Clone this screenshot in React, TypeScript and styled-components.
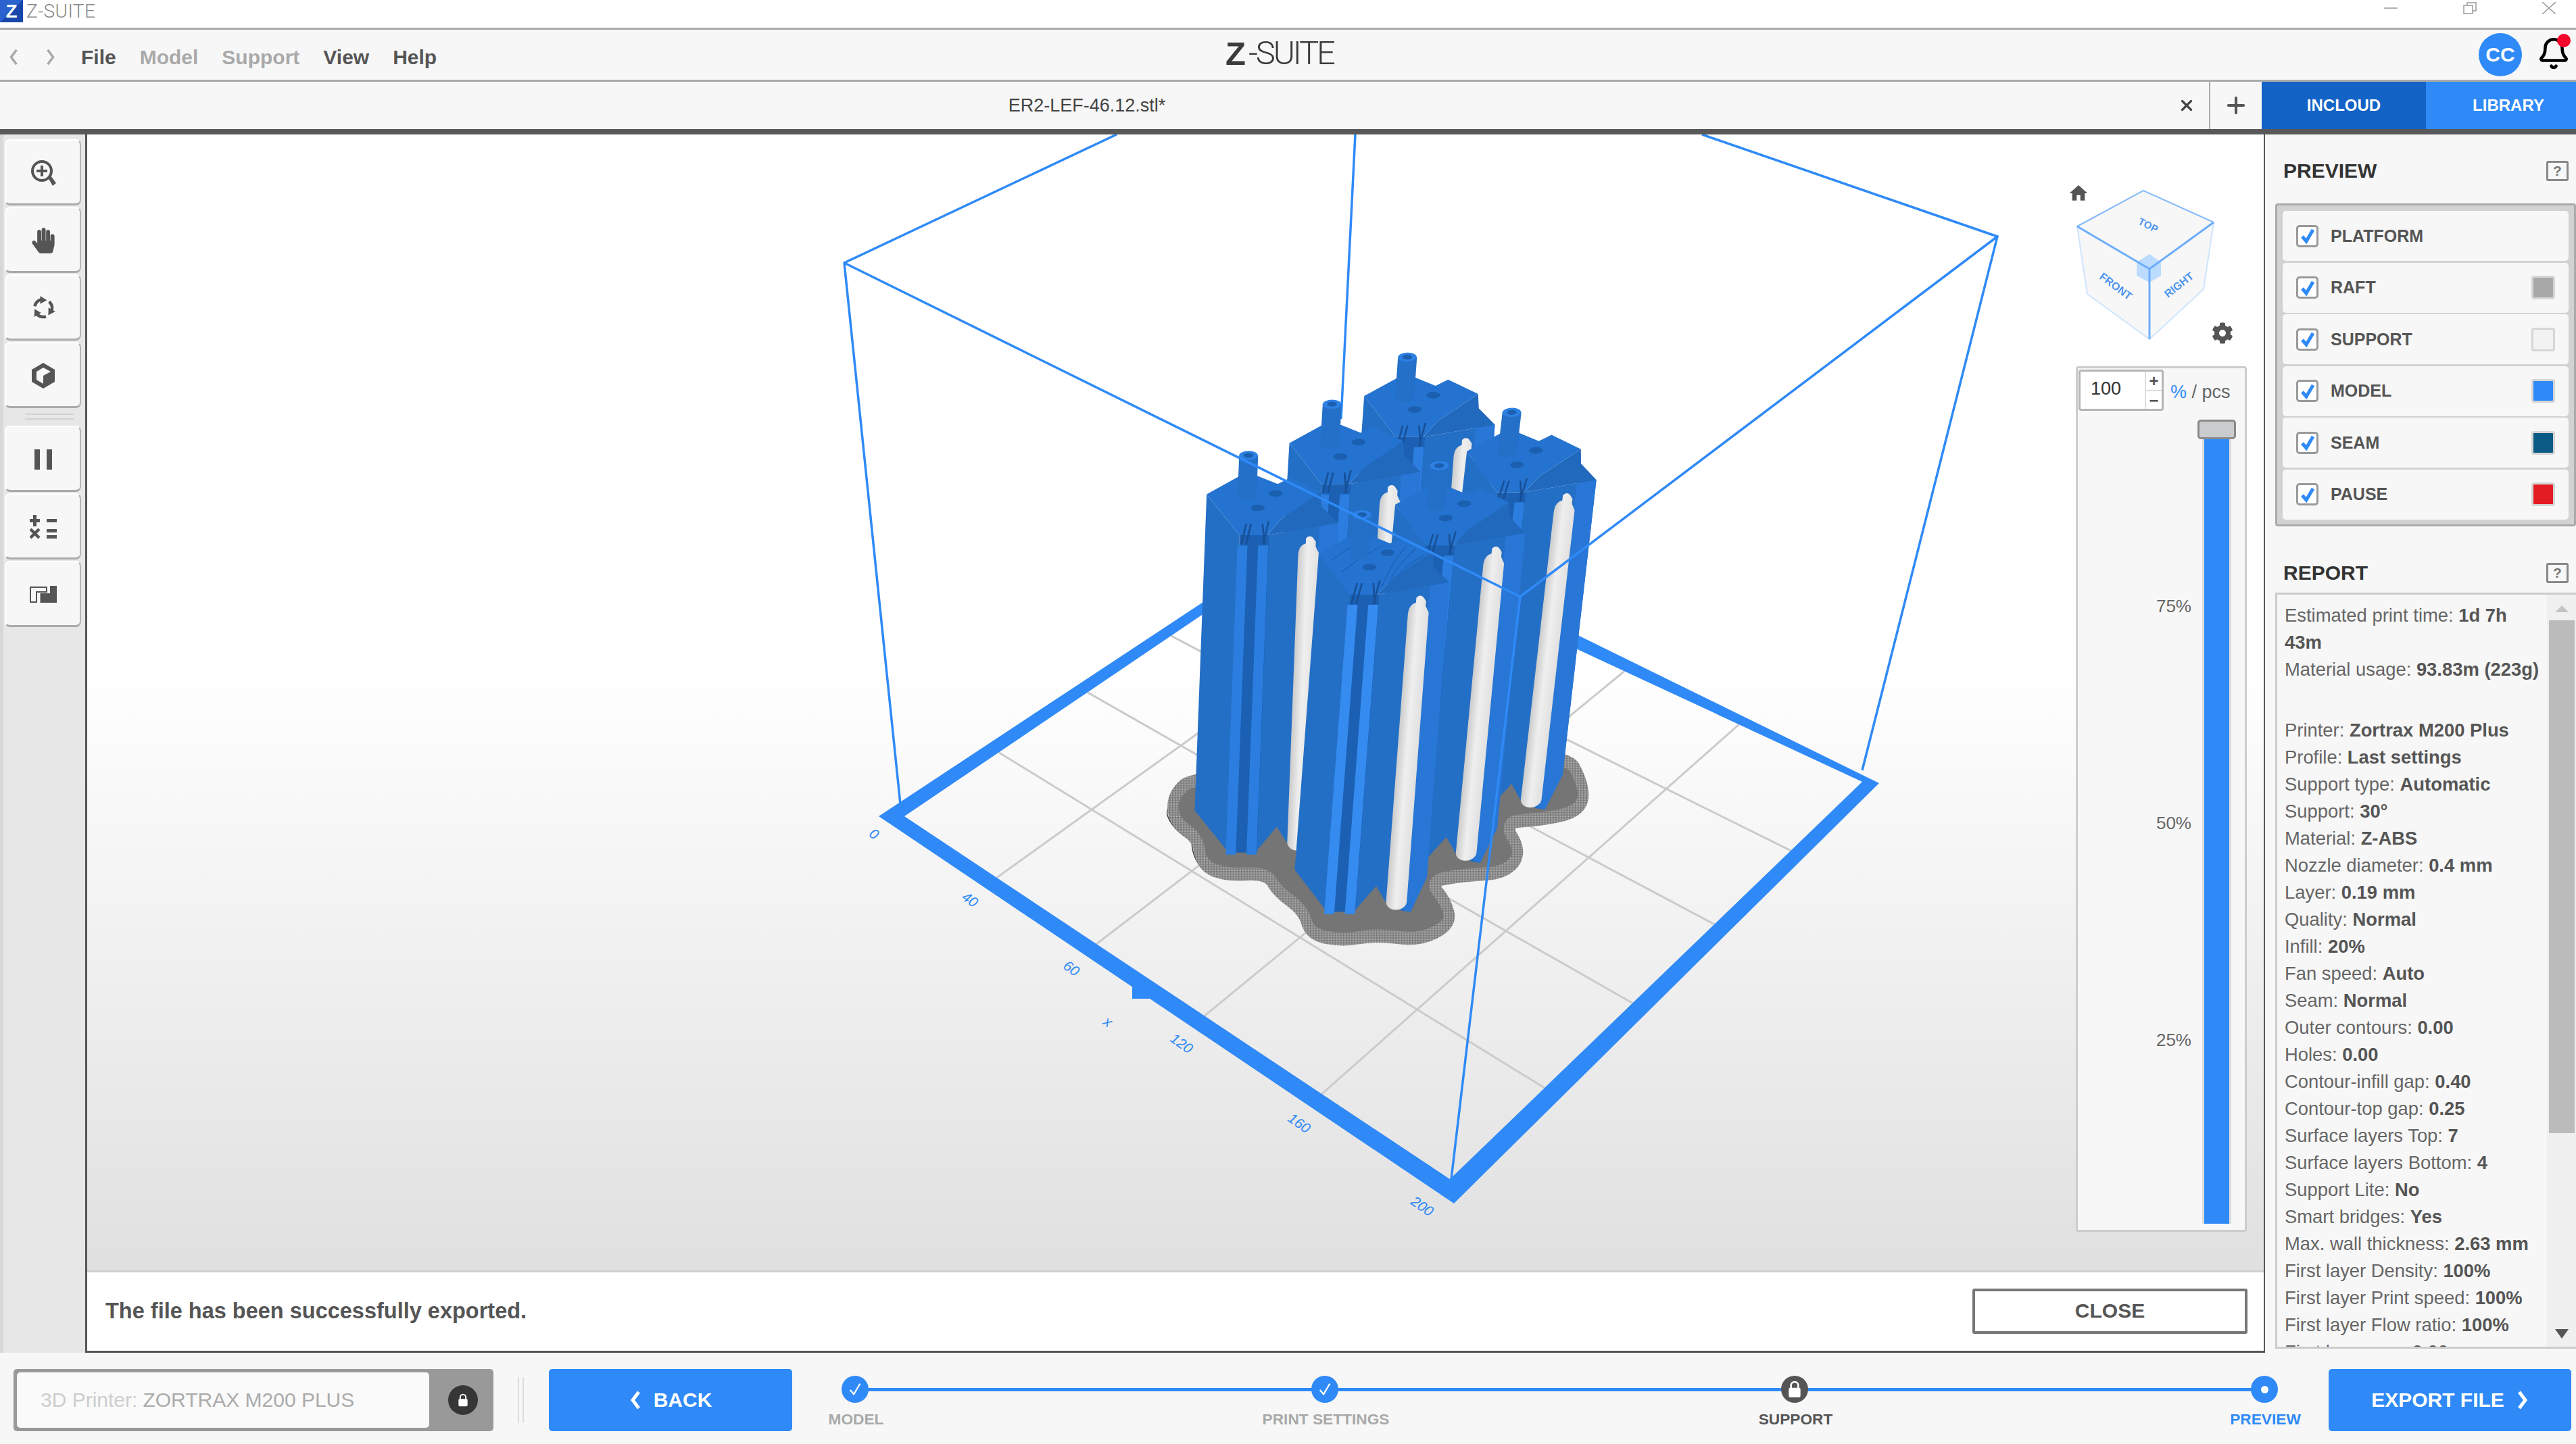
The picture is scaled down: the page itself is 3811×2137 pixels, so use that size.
import React from 'react';
import styled, { createGlobalStyle } from 'styled-components';
import { Bell, Plus, X } from 'lucide-react';
import { FaHandPaper, FaCog } from 'react-icons/fa';
import { MdHome } from 'react-icons/md';

const BLUE = '#2f8af7';

const GlobalStyle = createGlobalStyle`
    html, body {
        margin: 0;
        padding: 0;
        background: #f7f7f7;
    }
    * {
        box-sizing: border-box;
    }
    body {
        font-family: 'Liberation Sans', Arial, sans-serif;
        color: #555;
    }
`;

const Page = styled.div`
    width: 3811px;
    height: 2137px;
    display: flex;
    flex-direction: column;
    overflow: hidden;
`;

/* window title */
const TitleBar = styled.div`
    height: 44px;
    background: #fff;
    border-bottom: 3px solid #aaa;
    display: flex;
    align-items: flex-start;
`;

const AppMark = styled.div`
    width: 34px;
    height: 33px;
    background: linear-gradient(135deg, #2a62cf 50%, #1846ab 50%);
    color: #fff;
    font-size: 28px;
    font-weight: 700;
    line-height: 33px;
    text-align: center;
`;

const AppName = styled.div`
    margin-left: 5px;
    font-family: Roboto, sans-serif;
    font-weight: 300;
    font-size: 28px;
    line-height: 33px;
    letter-spacing: 0.4px;
    color: #888;
`;

const WinControls = styled.div`
    margin-left: auto;
    display: flex;
    gap: 97px;
    padding: 3px 30px 0 0;
`;

/* menu */
const MenuBar = styled.div`
    height: 77px;
    background: #f7f7f7;
    border-bottom: 3px solid #aaa;
    display: grid;
    grid-template-columns: 1813px auto 1fr;
    align-items: center;
`;

const MenuLeft = styled.div`
    display: flex;
    align-items: center;
    padding: 7px 0 0 12px;
`;

const NavArrows = styled.div`
    display: flex;
    gap: 39px;
    width: 108px;
`;

const MenuItem = styled.span<{ $off?: boolean }>`
    font-size: 30px;
    font-weight: 700;
    color: ${(p) => (p.$off ? '#a9a9a9' : '#555')};
    margin-right: 35px;
`;

const Logo = styled.div`
    display: flex;
    align-items: center;
    color: #3b3b3b;
    line-height: 36px;
    height: 36px;
    margin-top: -4px;
`;

const LogoZ = styled.span`
    font-size: 49px;
    font-weight: 700;
    width: 34px;
`;

const LogoRest = styled.span`
    font-family: Roboto, sans-serif;
    font-weight: 300;
    font-size: 49px;
    letter-spacing: -3.2px;
`;

const MenuRight = styled.div`
    display: flex;
    justify-content: flex-end;
    align-items: center;
    padding-right: 8px;
    gap: 22px;
`;

const Avatar = styled.div`
    width: 64px;
    height: 64px;
    border-radius: 50%;
    background: ${BLUE};
    color: #fff;
    font-size: 30px;
    font-weight: 700;
    display: flex;
    align-items: center;
    justify-content: center;
`;

const BellWrap = styled.div`
    position: relative;
    width: 50px;
    height: 56px;
    margin-top: 2px;
`;

const BellDot = styled.span`
    position: absolute;
    right: 0;
    top: -4px;
    width: 20px;
    height: 20px;
    border-radius: 50%;
    background: #f5062c;
`;

/* tabs */
const TabBar = styled.div`
    height: 78px;
    background: #f7f7f7;
    border-bottom: 8px solid #585858;
    display: flex;
    align-items: stretch;
`;

const FileTab = styled.div`
    flex: 1;
    display: flex;
    align-items: center;
    padding-right: 20px;
`;

const FileName = styled.div`
    flex: 1;
    text-align: center;
    font-size: 27px;
    padding-right: 6px;
    color: #444;
`;

const NewTab = styled.div`
    width: 78px;
    border-left: 2px solid #aaa;
    display: flex;
    align-items: center;
    justify-content: center;
    color: #555;
`;

const CloudTab = styled.div<{ $dark?: boolean }>`
    width: ${(p) => (p.$dark ? 243 : 222)}px;
    background: ${(p) => (p.$dark ? '#1363c6' : BLUE)};
    color: #fff;
    font-size: 24px;
    font-weight: 700;
    padding-left: ${(p) => (p.$dark ? 0 : 22)}px;
    display: flex;
    align-items: center;
    justify-content: center;
`;

/* main area */
const Main = styled.div`
    height: 1803px;
    display: flex;
`;

const ToolBar = styled.div`
    width: 129px;
    background: #e7e7e7;
    border-left: 5px solid #d8d8d8;
    border-right: 3px solid #555;
    padding: 7px 0 0 2px;
    display: flex;
    flex-direction: column;
    gap: 2px;
`;

const ToolButton = styled.div`
    width: 113px;
    height: 98px;
    background: #f7f7f7;
    border-radius: 8px;
    border-top: 2px solid #fff;
    border-left: 2px solid #fff;
    border-right: 2px solid #b5b5b5;
    border-bottom: 3px solid #aaa;
    padding-top: 2px;
    display: flex;
    align-items: center;
    justify-content: center;
    color: #555;
`;

const ToolSeparator = styled.div`
    height: 9px;
    width: 72px;
    margin: 6px 0 7px 30px;
    border-top: 2px solid #d2d2d2;
    border-bottom: 2px solid #d2d2d2;
`;

const Center = styled.div`
    flex: 1;
    display: flex;
    flex-direction: column;
    border-right: 2px solid #555;
    border-bottom: 3px solid #555;
`;

const Viewport = styled.div`
    position: relative;
    height: 1681px;
    background: linear-gradient(#fff 0, #fff 47%, #e0e0e0 100%);
    overflow: hidden;
`;

const Scene = styled.svg`
    display: block;
    width: 100%;
    height: 100%;
`;

const CubeWidget = styled.svg`
    position: absolute;
    left: 2921px;
    top: 61px;
    width: 300px;
    height: 270px;
    filter: blur(0.7px);
`;

const SliderPanel = styled.div`
    position: absolute;
    left: 2942px;
    top: 343px;
    width: 253px;
    height: 1281px;
    background: #f7f7f7;
    border: 3px solid #ccc;
    border-radius: 4px;
    padding: 2px 0 0 1px;
`;

const SliderHead = styled.div`
    display: flex;
    align-items: center;
    height: 61px;
`;

const ValueBox = styled.div`
    width: 126px;
    height: 61px;
    background: #fff;
    border: 3px solid #b5b5b5;
    border-radius: 4px;
    display: flex;
    align-items: stretch;
`;

const ValueText = styled.div`
    flex: 1;
    font-size: 27px;
    color: #333;
    padding-left: 15px;
    line-height: 50px;
`;

const Steppers = styled.div`
    width: 25px;
    border-left: 2px solid #ddd;
    display: flex;
    flex-direction: column;
    color: #555;
    font-size: 24px;
    font-weight: 700;
    line-height: 27px;
    text-align: center;
`;

const StepperCell = styled.div`
    flex: 1;
    & + & {
        border-top: 2px solid #ddd;
    }
`;

const Unit = styled.div`
    margin: 6px 0 0 10px;
    font-size: 27px;
    color: #666;
    white-space: nowrap;
`;

const UnitBlue = styled.span`
    color: ${BLUE};
`;

const SliderBody = styled.div`
    display: flex;
    margin-top: 13px;
`;

const Ticks = styled.div`
    width: 167px;
    padding-top: 256px;
    display: flex;
    flex-direction: column;
    gap: 281px;
    text-align: right;
    font-size: 26px;
    line-height: 40px;
    color: #666;
`;

const TrackColumn = styled.div`
    margin-left: 9px;
    width: 57px;
    display: flex;
    flex-direction: column;
    align-items: center;
`;

const Handle = styled.div`
    width: 57px;
    height: 29px;
    background: #c9cbcc;
    border: 3px solid #8a8a8a;
    border-radius: 5px;
`;

const Track = styled.div`
    width: 43px;
    height: 1161px;
    background: ${BLUE};
    border-left: 3px solid #ddd;
    border-right: 3px solid #ddd;
`;

const MessageBar = styled.div`
    flex: 1;
    background: #fff;
    border-top: 3px solid #d0d0d0;
    display: flex;
    align-items: center;
    justify-content: space-between;
    padding: 0 24px 2px 27px;
`;

const MessageText = styled.div`
    font-size: 32.5px;
    font-weight: 700;
    color: #555;
`;

const CloseButton = styled.div`
    width: 407px;
    height: 67px;
    border: 4px solid #777;
    border-radius: 3px;
    color: #555;
    font-size: 30px;
    font-weight: 700;
    display: flex;
    align-items: center;
    justify-content: center;
`;

/* right panel */
const SidePanel = styled.div`
    width: 460px;
    background: #f7f7f7;
    padding: 34px 0 6px 15px;
    display: flex;
    flex-direction: column;
`;

const PanelHead = styled.div`
    display: flex;
    align-items: center;
    justify-content: space-between;
    height: 40px;
    padding: 0 11px 0 12px;
`;

const PanelTitle = styled.div`
    font-size: 30px;
    font-weight: 700;
    color: #333;
`;

const HelpBox = styled.div`
    width: 33px;
    height: 30px;
    border: 3px solid #888;
    border-radius: 3px;
    color: #777;
    font-size: 21px;
    font-weight: 700;
    line-height: 24px;
    text-align: center;
`;

const PreviewBox = styled.div`
    margin-top: 28px;
    border: 3px solid #aaa;
    border-radius: 4px;
    background: #d2d2d2;
    padding: 8px 8px 7px;
    display: flex;
    flex-direction: column;
    gap: 2.5px;
`;

const PreviewRow = styled.div`
    height: 74px;
    background: #f7f7f7;
    border-radius: 5px;
    display: flex;
    align-items: center;
    padding: 0 20px;
`;

const CheckBox = styled.div`
    width: 33px;
    height: 33px;
    background: #fff;
    border: 3px solid #999;
    border-radius: 5px;
    display: flex;
    align-items: center;
    justify-content: center;
`;

const RowLabel = styled.div`
    margin-left: 18px;
    flex: 1;
    font-size: 25px;
    font-weight: 700;
    color: #555;
`;

const Swatch = styled.div<{ $color: string }>`
    width: 35px;
    height: 35px;
    border: 3px solid #d5d5d5;
    border-radius: 4px;
    background: ${(p) => p.$color};
`;

const ReportHead = styled(PanelHead)`
    margin-top: 49px;
`;

const ReportBox = styled.div`
    margin-top: 9px;
    flex: 1;
    min-height: 0;
    border: 3px solid #ccc;
    border-right: none;
    display: flex;
    overflow: hidden;
`;

const ReportText = styled.div`
    flex: 1;
    padding: 11px 3px 0 11px;
    font-size: 27.4px;
    line-height: 40px;
    color: #666;
`;

const ReportLine = styled.div`
    b {
        color: #555;
    }
`;

const ReportGap = styled.div`
    height: 50px;
`;

const ScrollBar = styled.div`
    width: 43px;
    background: #f0f0f0;
    display: flex;
    flex-direction: column;
    align-items: center;
    padding: 16px 2px 12px;
`;

const ScrollThumb = styled.div`
    width: 38px;
    height: 759px;
    margin-top: 12px;
    background: #bbb;
`;

const ArrowUp = styled.div`
    width: 0;
    height: 0;
    border-left: 10px solid transparent;
    border-right: 10px solid transparent;
    border-bottom: 10px solid #c4c4c4;
`;

const ArrowDown = styled.div`
    width: 0;
    height: 0;
    margin-top: auto;
    border-left: 10px solid transparent;
    border-right: 10px solid transparent;
    border-top: 14px solid #555;
`;

/* bottom */
const BottomBar = styled.div`
    flex: 1;
    display: flex;
    align-items: center;
    padding: 5px 7px 0 20px;
    background: #f7f7f7;
`;

const PrinterField = styled.div`
    width: 710px;
    height: 92px;
    background: #999;
    border-radius: 5px;
    padding: 5px 0 5px 5px;
    display: flex;
    align-items: center;
`;

const PrinterName = styled.div`
    width: 610px;
    height: 82px;
    background: #fafafa;
    border-radius: 5px;
    padding-left: 35px;
    display: flex;
    align-items: center;
    font-size: 30px;
    color: #ababab;
`;

const PrinterPrefix = styled.span`
    color: #cdcdcd;
    margin-right: 8px;
`;

const PrinterLock = styled.div`
    width: 44px;
    height: 44px;
    margin-left: 28px;
    border-radius: 50%;
    background: #363636;
    display: flex;
    align-items: center;
    justify-content: center;
`;

const BarDivider = styled.div`
    width: 9px;
    height: 68px;
    margin: 0 37px 0 36px;
    border-left: 2px solid #ddd;
    border-right: 2px solid #ddd;
`;

const ActionButton = styled.div<{ $w: number }>`
    width: ${(p) => p.$w}px;
    height: 92px;
    background: ${BLUE};
    border-radius: 5px;
    color: #fff;
    font-size: 30px;
    font-weight: 700;
    display: flex;
    align-items: center;
    justify-content: center;
    gap: 18px;
`;

const Stepper = styled.div`
    position: relative;
    width: 2185px;
    height: 92px;
    margin: 0 45px 0 43px;
    display: flex;
    justify-content: space-between;
`;

const StepLine = styled.div`
    position: absolute;
    left: 50px;
    right: 50px;
    top: 28px;
    height: 5px;
    background: ${BLUE};
`;

const Step = styled.div`
    position: relative;
    width: 100px;
    padding-top: 10px;
    display: flex;
    flex-direction: column;
    align-items: center;
`;

const StepDot = styled.div<{ $dark?: boolean }>`
    width: 40px;
    height: 40px;
    border-radius: 50%;
    background: ${(p) => (p.$dark ? '#555' : BLUE)};
    display: flex;
    align-items: center;
    justify-content: center;
`;

const StepInner = styled.div`
    width: 11px;
    height: 11px;
    border-radius: 50%;
    background: #fff;
`;

const StepLabel = styled.div<{ $color: string }>`
    margin-top: 11px;
    padding-left: 3px;
    font-size: 22.7px;
    line-height: 26px;
    font-weight: 700;
    white-space: nowrap;
    color: ${(p) => p.$color};
`;

const PREVIEW_ROWS: [string, string | null][] = [
    ['PLATFORM', null],
    ['RAFT', '#a8a8a8'],
    ['SUPPORT', '#f2f2f2'],
    ['MODEL', BLUE],
    ['SEAM', '#0a5a84'],
    ['PAUSE', '#e31c24'],
];

const REPORT: [string, string][] = [
    ['Estimated print time: ', '1d 7h'],
    ['', '43m'],
    ['Material usage: ', '93.83m (223g)'],
    ['', ''],
    ['Printer: ', 'Zortrax M200 Plus'],
    ['Profile: ', 'Last settings'],
    ['Support type: ', 'Automatic'],
    ['Support: ', '30°'],
    ['Material: ', 'Z-ABS'],
    ['Nozzle diameter: ', '0.4 mm'],
    ['Layer: ', '0.19 mm'],
    ['Quality: ', 'Normal'],
    ['Infill: ', '20%'],
    ['Fan speed: ', 'Auto'],
    ['Seam: ', 'Normal'],
    ['Outer contours: ', '0.00'],
    ['Holes: ', '0.00'],
    ['Contour-infill gap: ', '0.40'],
    ['Contour-top gap: ', '0.25'],
    ['Surface layers Top: ', '7'],
    ['Surface layers Bottom: ', '4'],
    ['Support Lite: ', 'No'],
    ['Smart bridges: ', 'Yes'],
    ['Max. wall thickness: ', '2.63 mm'],
    ['First layer Density: ', '100%'],
    ['First layer Print speed: ', '100%'],
    ['First layer Flow ratio: ', '100%'],
    ['First layer gap: ', '0.00'],
];

const ChevronIcon = ({ left, w = 18, h = 28, color = '#fff', sw = 5 }: { left?: boolean; w?: number; h?: number; color?: string; sw?: number }) => (
    <svg width={w} height={h} viewBox="0 0 18 28" preserveAspectRatio="none">
        <polyline
            points={left ? '14,2 5,14 14,26' : '4,2 13,14 4,26'}
            fill="none"
            stroke={color}
            strokeWidth={sw}
        />
    </svg>
);

const TickIcon = ({ size = 24, color = BLUE, sw = 5 }: { size?: number; color?: string; sw?: number }) => (
    <svg width={size} height={size} viewBox="0 0 24 24">
        <polyline points="4,13 10,20 20,3" fill="none" stroke={color} strokeWidth={sw} />
    </svg>
);

const LockIcon = ({ size = 24 }: { size?: number }) => (
    <svg width={size} height={size} viewBox="0 0 24 24">
        <path d="M7 11V7a5 5 0 0 1 10 0v4" fill="none" stroke="#fff" strokeWidth="2.4" />
        <rect x="4" y="10" width="16" height="13" rx="2" fill="#fff" />
    </svg>
);

const ZoomIcon = () => (
    <svg width="40" height="40" viewBox="0 0 40 40">
        <circle cx="18" cy="17" r="14" fill="none" stroke="#555" strokeWidth="4" />
        <path d="M18 9v16M10 17h16" stroke="#555" strokeWidth="4" />
        <polygon points="27,27 31,24 39,35 34,39" fill="#555" />
    </svg>
);

const OrbitIcon = () => (
    <svg width="36" height="36" viewBox="0 0 40 40">
        {[0, 120, 240].map((deg) => (
            <g key={deg} transform={`rotate(${deg} 20 20)`}>
                <path d="M6 17A14.5 14.5 0 0 1 16 6" fill="none" stroke="#555" strokeWidth="5" />
                <polygon points="15,0 26,7 15,13" fill="#555" />
            </g>
        ))}
    </svg>
);

const BoxIcon = () => (
    <svg width="38" height="40" viewBox="0 0 38 40">
        <polygon points="19,1 36,11 36,29 19,39 2,29 2,11" fill="#555" />
        <polygon points="19,8 30,14 19,20 19,32 9,26 9,14" fill="#f7f7f7" />
    </svg>
);

const PauseIcon = () => (
    <svg width="28" height="30" viewBox="0 0 28 30">
        <path d="M1 0h8v30H1zM19 0h8v30h-8z" fill="#555" />
    </svg>
);

const CalcIcon = () => (
    <svg width="40" height="36" viewBox="0 0 40 36">
        <path d="M0 6h15v5H0zM5 0h5v17H5zM25 6h15v5H25zM25 21h15v5H25zM25 30h15v5H25z" fill="#555" />
        <path d="M1 21l13 13M14 21L1 34" stroke="#555" strokeWidth="4.5" />
    </svg>
);

const LayersIcon = () => (
    <svg width="40" height="26" viewBox="0 0 40 26">
        <polygon points="30,0 40,0 40,25 15.5,25 15.5,11 30,11" fill="#555" />
        <polygon points="1,2 25,2 25,9 10,9 10,24 1,24" fill="none" stroke="#555" strokeWidth="2" />
    </svg>
);

/* the platform, in page pixels */
const A = [1338, 1208];
const B = [2145, 1745];
const C = [2755, 1157];
const D = [1960, 787];

const project = (u: number, v: number) => {
    const dx1 = B[0] - C[0];
    const dx2 = D[0] - C[0];
    const sx = A[0] - B[0] + C[0] - D[0];
    const dy1 = B[1] - C[1];
    const dy2 = D[1] - C[1];
    const sy = A[1] - B[1] + C[1] - D[1];
    const den = dx1 * dy2 - dx2 * dy1;
    const g = (sx * dy2 - dx2 * sy) / den;
    const h = (dx1 * sy - sx * dy1) / den;
    const w = g * u + h * v + 1;
    return [
        ((B[0] - A[0] + g * B[0]) * u + (D[0] - A[0] + h * D[0]) * v + A[0]) / w,
        ((B[1] - A[1] + g * B[1]) * u + (D[1] - A[1] + h * D[1]) * v + A[1]) / w,
    ];
};

const GRID = [0.2, 0.4, 0.6, 0.8];

const GridLines = () => (
    <g stroke="#cbcbcb" strokeWidth="3">
        {GRID.map((t) => {
            const a = project(t, 0);
            const b = project(t, 1);
            const c = project(0, t);
            const d = project(1, t);
            return (
                <g key={t}>
                    <line x1={a[0]} y1={a[1]} x2={b[0]} y2={b[1]} />
                    <line x1={c[0]} y1={c[1]} x2={d[0]} y2={d[1]} />
                </g>
            );
        })}
    </g>
);

const AXIS: [string, number, number][] = [
    ['0', 1289, 1240],
    ['40', 1431, 1337],
    ['60', 1581, 1439],
    ['x', 1635, 1518],
    ['120', 1744, 1550],
    ['160', 1918, 1668],
    ['200', 2100, 1791],
];

const RAFT_POINTS = [
    [235, 1100], [165, 1150], [170, 1215], [240, 1255], [250, 1320], [320, 1345],
    [440, 1340], [470, 1385], [545, 1430], [565, 1490], [660, 1505], [760, 1490],
    [880, 1505], [975, 1465], [960, 1410], [910, 1360], [1010, 1345], [1130, 1340],
    [1180, 1290], [1125, 1215], [1230, 1210], [1345, 1190], [1365, 1135], [1300, 1030],
];

/* corners rounded by running each span through its midpoints */
const smooth = (pts: number[][]) => {
    const mid = (a: number[], b: number[]) => `${(a[0] + b[0]) / 2} ${(a[1] + b[1]) / 2}`;
    let d = `M${mid(pts[pts.length - 1], pts[0])}`;
    pts.forEach((p, i) => {
        d += `Q${p[0]} ${p[1]} ${mid(p, pts[(i + 1) % pts.length])}`;
    });
    return d + 'Z';
};

/* one printed part, drawn upright and leaned with k */
const Tower = ({ x, y, k, rings }: { x: number; y: number; k: number; rings?: boolean }) => {
    const rib = rings ? '#358bf0' : '#2b7ee0';
    return (
        <g transform={`matrix(1 0 ${k} 1 ${x} ${y})`}>
            <polygon points="180,100 385,70 385,790 345,875 320,872 270,850 240,812 180,875" fill="#246fc6" />
            <polygon points="330,72 385,70 385,790 345,875 325,870" fill="#2876d6" />
            <polygon points="0,0 100,100 100,872 0,772" fill="#246fc6" />
            <rect x="100" y="100" width="85" height="775" fill="#1b60b3" />
            <rect x="95" y="125" width="29" height="755" fill={rib} />
            <rect x="155" y="125" width="29" height="755" fill={rib} />
            <polygon points="220,60 330,-5 335,30 385,70 180,100" fill="#2169bd" />
            <polygon points="0,0 115,-55 205,-25 240,-40 330,-5 220,60 180,100 100,100" fill="#2473d0" />
            {rings && (
                <g fill="none" stroke="#1a5fb0" strokeWidth="2">
                    <path d="M40 15Q100 -25 150 -40" />
                    <path d="M70 45Q130 5 185 -20" />
                    <path d="M190 82Q215 20 250 -15" />
                    <path d="M215 60Q235 25 280 -12" />
                    <path d="M240 45Q270 20 305 5" />
                </g>
            )}
            <path d="M118 72L106 122M132 72L120 122M165 72L174 122M183 66L170 122" stroke="#174f96" strokeWidth="5" fill="none" />
            <ellipse cx="200" cy="-2" rx="20" ry="8" fill="#1b5fb0" />
            <ellipse cx="150" cy="33" rx="20" ry="8" fill="#1b5fb0" />
            <rect x="90" y="-95" width="55" height="100" fill="#2470c8" />
            <ellipse cx="117" cy="5" rx="27" ry="10" fill="#2470c8" />
            <ellipse cx="117" cy="-95" rx="27" ry="11" fill="#2d80e4" />
            <ellipse cx="117" cy="-95" rx="14" ry="6" fill="#1a5fb0" />
            <path d="M272 150Q272 125 293 120V108a14 14 0 0 1 22 0l7 8v12l10 16V850a30 20 0 0 1-60 0Z" fill="url(#cylinder)" />
        </g>
    );
};

const Model = () => (
    <g transform="translate(1650 480) scale(0.51 0.606)">
        <path
            d="M250 1105Q150 1160 150 1195Q160 1230 222 1262Q222 1320 285 1348"
            fill="none"
            stroke="#444"
            strokeWidth="3"
        />
        <path d={smooth(RAFT_POINTS)} fill="#757575" stroke="url(#speck)" strokeWidth="32" />
        <Tower x={722} y={175} k={-0.085} />
        <Tower x={505} y={290} k={-0.07} />
        <Tower x={1020} y={310} k={-0.136} />
        <Tower x={812} y={440} k={-0.113} />
        <Tower x={265} y={415} k={-0.045} />
        <Tower x={590} y={560} k={-0.09} rings />
    </g>
);

const App = () => (
    <Page>
        <GlobalStyle />
        <TitleBar>
            <AppMark>Z</AppMark>
            <AppName>Z-SUITE</AppName>
            <WinControls>
                <svg width="20" height="18" viewBox="0 0 20 18">
                    <path d="M0 9h20" stroke="#999" strokeWidth="1.5" />
                </svg>
                <svg width="20" height="18" viewBox="0 0 20 18">
                    <path d="M1 5h13v12H1zM6 5V1h13v12h-5" fill="none" stroke="#999" strokeWidth="1.5" />
                </svg>
                <svg width="20" height="18" viewBox="0 0 20 18">
                    <path d="M0 0l20 18M20 0L0 18" stroke="#999" strokeWidth="1.5" />
                </svg>
            </WinControls>
        </TitleBar>
        <MenuBar>
            <MenuLeft>
                <NavArrows>
                    <ChevronIcon left w={16} h={25} color="#aaa" sw={4} />
                    <ChevronIcon w={16} h={25} color="#aaa" sw={4} />
                </NavArrows>
                <MenuItem>File</MenuItem>
                <MenuItem $off>Model</MenuItem>
                <MenuItem $off>Support</MenuItem>
                <MenuItem>View</MenuItem>
                <MenuItem>Help</MenuItem>
            </MenuLeft>
            <Logo>
                <LogoZ>Z</LogoZ>
                <LogoRest>-SUITE</LogoRest>
            </Logo>
            <MenuRight>
                <Avatar>CC</Avatar>
                <BellWrap>
                    <Bell size={50} color="#000" strokeWidth={2.2} />
                    <BellDot />
                </BellWrap>
            </MenuRight>
        </MenuBar>
        <TabBar>
            <FileTab>
                <FileName>ER2-LEF-46.12.stl*</FileName>
                <X size={26} color="#444" strokeWidth={3} />
            </FileTab>
            <NewTab>
                <Plus size={38} strokeWidth={2.6} />
            </NewTab>
            <CloudTab $dark>INCLOUD</CloudTab>
            <CloudTab>LIBRARY</CloudTab>
        </TabBar>
        <Main>
            <ToolBar>
                <ToolButton><ZoomIcon /></ToolButton>
                <ToolButton><FaHandPaper size={38} /></ToolButton>
                <ToolButton><OrbitIcon /></ToolButton>
                <ToolButton><BoxIcon /></ToolButton>
                <ToolSeparator />
                <ToolButton><PauseIcon /></ToolButton>
                <ToolButton><CalcIcon /></ToolButton>
                <ToolButton><LayersIcon /></ToolButton>
            </ToolBar>
            <Center>
                <Viewport>
                    <Scene viewBox="129 199 3220 1681">
                        <defs>
                            <linearGradient id="cylinder" x1="0" x2="1" y1="0" y2="0">
                                <stop offset="0" stopColor="#cbcbcb" />
                                <stop offset="0.45" stopColor="#efefef" />
                                <stop offset="1" stopColor="#e0e0e0" />
                            </linearGradient>
                            <pattern id="speck" width="8" height="6" patternUnits="userSpaceOnUse">
                                <rect width="8" height="6" fill="#8a8a8a" />
                                <rect x="1" y="1" width="3" height="2" fill="#c2c2c2" />
                                <rect x="5" y="3" width="2" height="2" fill="#5c5c5c" />
                            </pattern>
                        </defs>
                        <g stroke={BLUE} strokeWidth="3.5" fill="none">
                            <path d="M1652 199L1249 389L1332 1190M2518 199L2955 350L2755 1140M2005 199L1984 620" />
                        </g>
                        <GridLines />
                        <path
                            fillRule="evenodd"
                            fill={BLUE}
                            d="M1300 1208L1974 763L2780 1159L2151 1781ZM1338 1208L2145 1745L2755 1157L1960 787Z"
                        />
                        <polygon points="1675,1459 1675,1478 1700,1478 1710,1470 1690,1445" fill={BLUE} />
                        <g fill={BLUE} fontSize="21" fontFamily="'Liberation Sans', sans-serif" fontStyle="italic">
                            {AXIS.map(([t, x, y]) => (
                                <text key={t} x={x} y={y} textAnchor="middle" transform={`rotate(35 ${x} ${y})`}>
                                    {t}
                                </text>
                            ))}
                        </g>
                        <Model />
                        <path
                            d="M1249 389L2249 883L2955 350M2249 883L2147 1745"
                            stroke={BLUE}
                            strokeWidth="3.5"
                            fill="none"
                        />
                    </Scene>
                    <CubeWidget viewBox="3050 260 300 270">
                        <polygon points="3171,282 3275,329 3260,428 3180,502 3088,435 3073,335" fill="#f7f7f7" />
                        <path d="M3073 335L3088 435L3180 502L3260 428L3275 329" fill="none" stroke="#cfe4fd" strokeWidth="2" />
                        <path d="M3073 335L3171 282L3275 329" fill="none" stroke="#84bafb" strokeWidth="2" />
                        <polygon points="3180,376 3197,388 3197,408 3180,418 3161,408 3161,388" fill="#bcdcff" />
                        <path d="M3073 335L3180 398L3275 329M3180 398V502" fill="none" stroke="#6dadfb" strokeWidth="3" />
                        <g fill="#4a94ee" fontWeight="700" fontFamily="'Liberation Sans', sans-serif">
                            <text x="3176" y="338" fontSize="15" textAnchor="middle" transform="rotate(27 3176 338)">TOP</text>
                            <text x="3127" y="428" fontSize="16" textAnchor="middle" transform="rotate(37 3127 428)">FRONT</text>
                            <text x="3227" y="426" fontSize="16" textAnchor="middle" transform="rotate(-38 3227 426)">RIGHT</text>
                        </g>
                        <MdHome x={3059} y={270} size={32} color="#555" />
                        <FaCog x={3272} y={477} size={32} color="#555" />
                    </CubeWidget>
                    <SliderPanel>
                        <SliderHead>
                            <ValueBox>
                                <ValueText>100</ValueText>
                                <Steppers>
                                    <StepperCell>+</StepperCell>
                                    <StepperCell>−</StepperCell>
                                </Steppers>
                            </ValueBox>
                            <Unit><UnitBlue>%</UnitBlue> / pcs</Unit>
                        </SliderHead>
                        <SliderBody>
                            <Ticks>
                                <div>75%</div>
                                <div>50%</div>
                                <div>25%</div>
                            </Ticks>
                            <TrackColumn>
                                <Handle />
                                <Track />
                            </TrackColumn>
                        </SliderBody>
                    </SliderPanel>
                </Viewport>
                <MessageBar>
                    <MessageText>The file has been successfully exported.</MessageText>
                    <CloseButton>CLOSE</CloseButton>
                </MessageBar>
            </Center>
            <SidePanel>
                <PanelHead>
                    <PanelTitle>PREVIEW</PanelTitle>
                    <HelpBox>?</HelpBox>
                </PanelHead>
                <PreviewBox>
                    {PREVIEW_ROWS.map(([label, color]) => (
                        <PreviewRow key={label}>
                            <CheckBox><TickIcon /></CheckBox>
                            <RowLabel>{label}</RowLabel>
                            {color && <Swatch $color={color} />}
                        </PreviewRow>
                    ))}
                </PreviewBox>
                <ReportHead>
                    <PanelTitle>REPORT</PanelTitle>
                    <HelpBox>?</HelpBox>
                </ReportHead>
                <ReportBox>
                    <ReportText>
                        {REPORT.map(([label, value], i) =>
                            label || value ? (
                                <ReportLine key={i}>
                                    {label}
                                    <b>{value}</b>
                                </ReportLine>
                            ) : (
                                <ReportGap key={i} />
                            ),
                        )}
                    </ReportText>
                    <ScrollBar>
                        <ArrowUp />
                        <ScrollThumb />
                        <ArrowDown />
                    </ScrollBar>
                </ReportBox>
            </SidePanel>
        </Main>
        <BottomBar>
            <PrinterField>
                <PrinterName>
                    <PrinterPrefix>3D Printer:</PrinterPrefix>
                    ZORTRAX M200 PLUS
                </PrinterName>
                <PrinterLock><LockIcon size={20} /></PrinterLock>
            </PrinterField>
            <BarDivider />
            <ActionButton $w={360}>
                <ChevronIcon left />
                BACK
            </ActionButton>
            <Stepper>
                <StepLine />
                <Step>
                    <StepDot><TickIcon size={22} color="#fff" sw={2.5} /></StepDot>
                    <StepLabel $color="#a9a9a9">MODEL</StepLabel>
                </Step>
                <Step>
                    <StepDot><TickIcon size={22} color="#fff" sw={2.5} /></StepDot>
                    <StepLabel $color="#a9a9a9">PRINT SETTINGS</StepLabel>
                </Step>
                <Step>
                    <StepDot $dark><LockIcon size={26} /></StepDot>
                    <StepLabel $color="#555">SUPPORT</StepLabel>
                </Step>
                <Step>
                    <StepDot><StepInner /></StepDot>
                    <StepLabel $color={BLUE}>PREVIEW</StepLabel>
                </Step>
            </Stepper>
            <ActionButton $w={359}>
                EXPORT FILE
                <ChevronIcon />
            </ActionButton>
        </BottomBar>
    </Page>
);

export default App;
